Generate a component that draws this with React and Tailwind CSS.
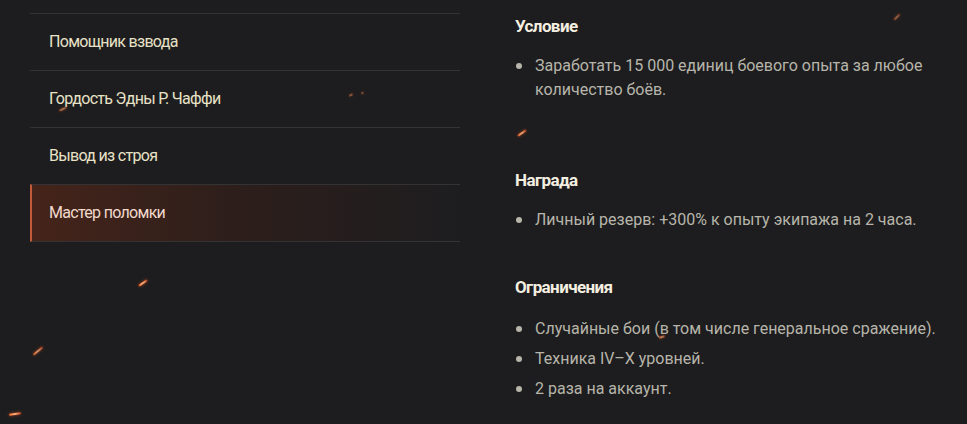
import React from "react";

const menu = [
  { label: "Помощник взвода" },
  { label: "Гордость Эдны Р. Чаффи" },
  { label: "Вывод из строя" },
  { label: "Мастер поломки", active: true },
];

const sparks = [
  { x: 893, y: 16, w: 8, r: -45, o: 0.5 },
  { x: 517, y: 132, w: 10, r: -35, o: 0.9 },
  { x: 138, y: 282, w: 10, r: -35, o: 1 },
  { x: 32, y: 350, w: 12, r: -40, o: 0.8 },
  { x: 9, y: 413, w: 12, r: -8, o: 1 },
  { x: 59, y: 108, w: 8, r: -25, o: 0.6 },
  { x: 349, y: 94, w: 4, r: -30, o: 0.5 },
  { x: 361, y: 92, w: 3, r: -30, o: 0.4 },
  { x: 659, y: 336, w: 6, r: -20, o: 0.7 },
];

function Bullet({ children }) {
  return (
    <li className="flex items-start">
      <span className="mt-[9px] ml-[1px] mr-[13px] h-[6px] w-[6px] shrink-0 rounded-full bg-[#b8b6ab]" />
      <span>{children}</span>
    </li>
  );
}

export default function App() {
  return (
    <div
      className="relative flex h-[424px] w-[967px] overflow-hidden bg-[#1d1d1f]"
      style={{ fontFamily: "Roboto, 'Liberation Sans', sans-serif" }}
    >
      <div className="ml-[30px] mt-[13px] w-[430px] shrink-0">
        {menu.map((m) => (
          <div
            key={m.label}
            className={
              m.active
                ? "flex h-[58px] items-center border-t border-b border-[#333335] border-l-2 border-l-[#c35a3c] bg-gradient-to-r from-[#45241a] via-[#2c1e1b] to-[#1d1d1f] pl-[17px] text-[16px] tracking-[-0.7px] text-[#f2d9cc]"
                : "flex h-[57px] items-center border-t border-[#333335] pl-[19px] text-[16px] tracking-[-0.7px] text-[#e8e2c6]"
            }
          >
            {m.label}
          </div>
        ))}
      </div>

      <div className="ml-[55px] pt-[14px] text-[16px] leading-[24px] text-[#b7b5aa]">
        <h3 className="text-[17px] font-bold leading-[24px] tracking-[-0.6px] text-[#f4efe0]">Условие</h3>
        <ul className="mt-[16px] w-[420px]">
          <Bullet>Заработать 15 000 единиц боевого опыта за любое количество боёв.</Bullet>
        </ul>

        <h3 className="mt-[66px] text-[17px] font-bold leading-[24px] tracking-[-0.6px] text-[#f4efe0]">Награда</h3>
        <ul className="mt-[16px]">
          <Bullet>Личный резерв: +300% к опыту экипажа на 2 часа.</Bullet>
        </ul>

        <h3 className="mt-[43px] text-[17px] font-bold leading-[24px] tracking-[-0.6px] text-[#f4efe0]">Ограничения</h3>
        <ul className="mt-[18px] flex flex-col gap-[6px]">
          <Bullet>Случайные бои (в том числе генеральное сражение).</Bullet>
          <Bullet>Техника IV–X уровней.</Bullet>
          <Bullet>2 раза на аккаунт.</Bullet>
        </ul>
      </div>

      {sparks.map((s, i) => (
        <span
          key={i}
          className="pointer-events-none absolute h-[2px] rounded-full bg-gradient-to-r from-[#ff6a2a] via-[#ffb27a] to-[#c8401c] blur-[0.4px]"
          style={{
            left: s.x,
            top: s.y,
            width: s.w,
            opacity: s.o,
            transform: `rotate(${s.r}deg)`,
            boxShadow: "0 0 3px rgba(255,90,30,0.7)",
          }}
        />
      ))}
    </div>
  );
}
